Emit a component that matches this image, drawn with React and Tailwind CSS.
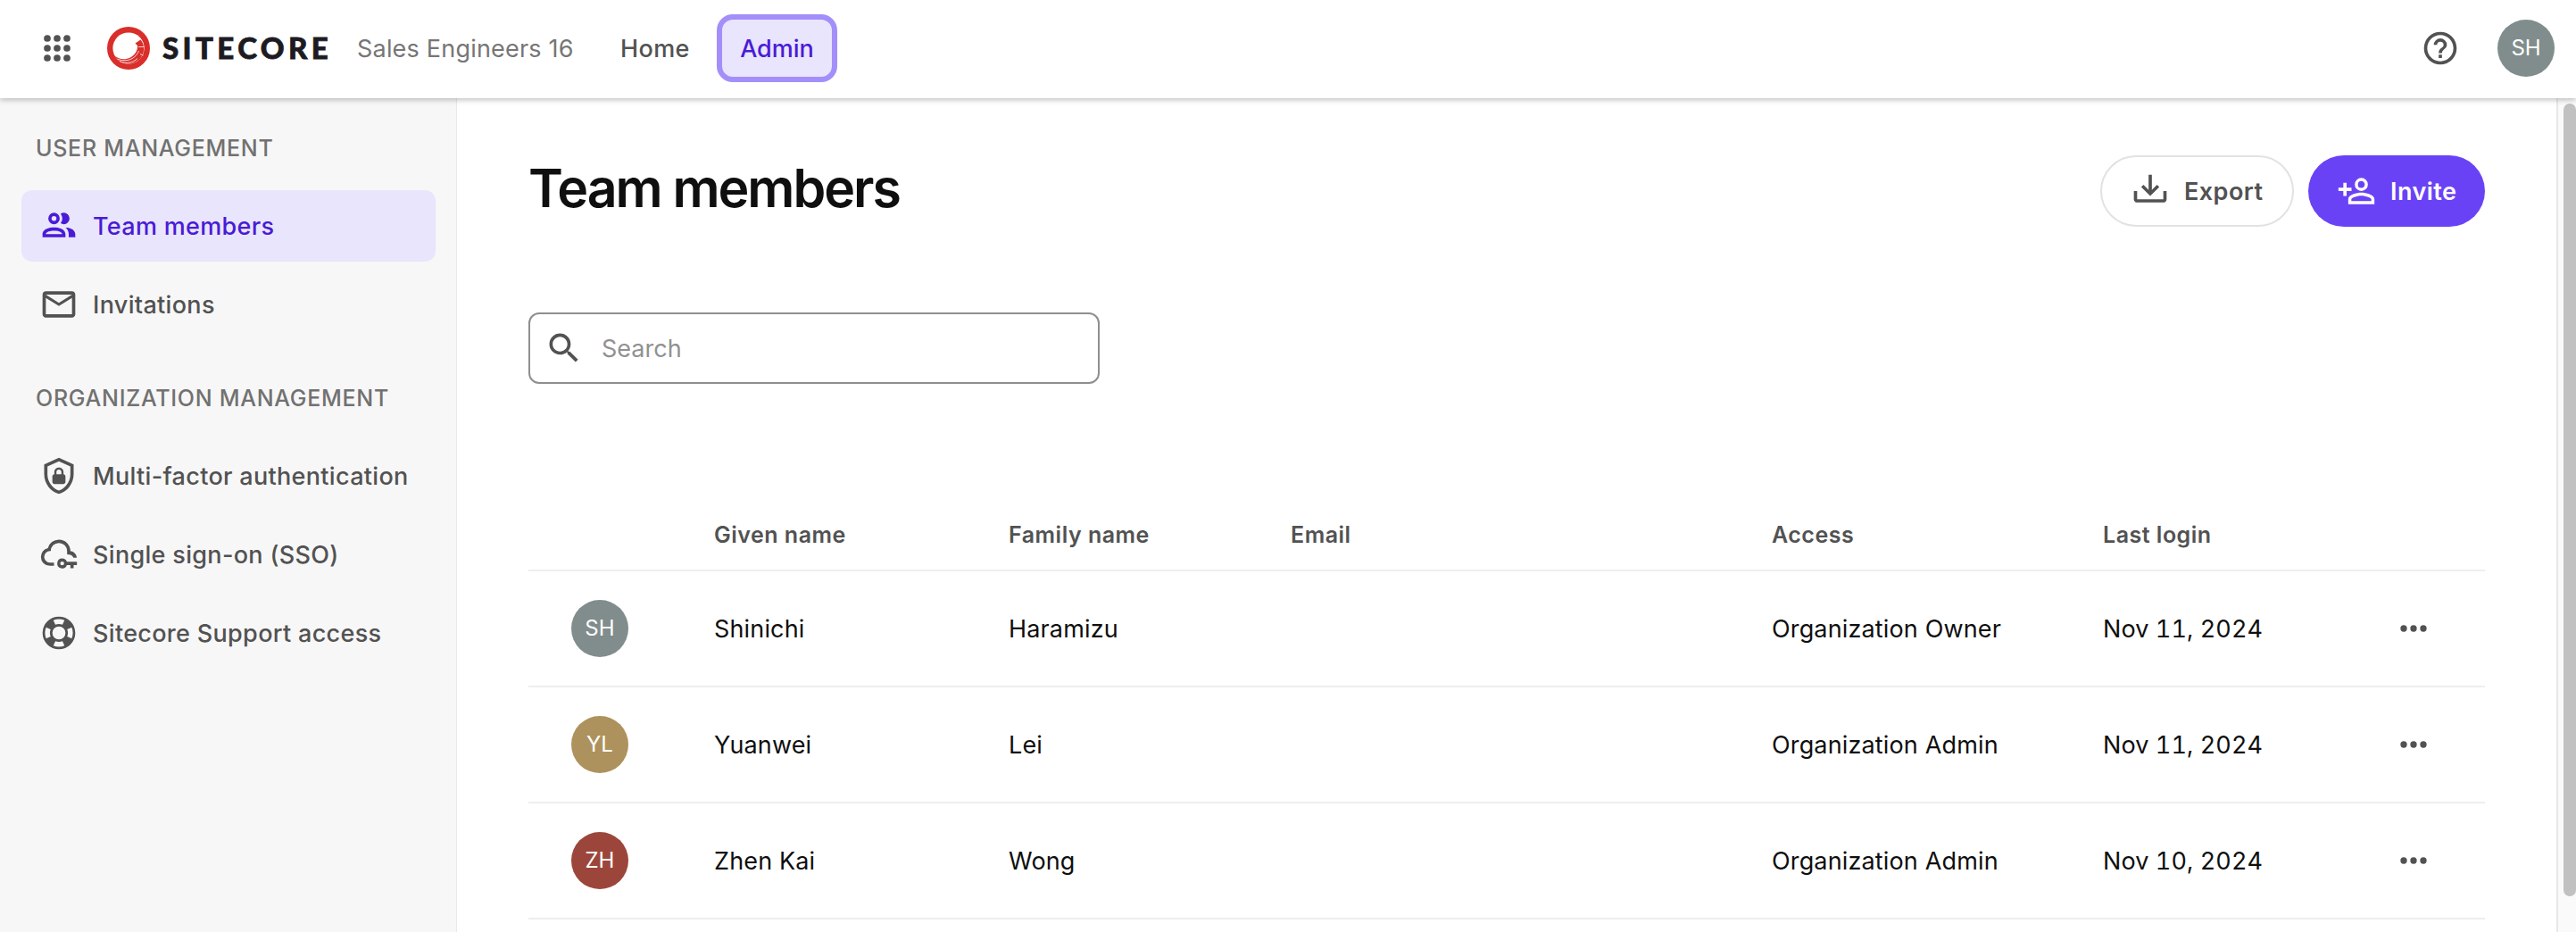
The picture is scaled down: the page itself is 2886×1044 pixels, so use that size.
const ICONS = {
  people: "M13.07 10.41A5 5 0 0 0 13.07 4.59A3.39 3.39 0 0 1 15 4A3.5 3.5 0 0 1 15 11A3.39 3.39 0 0 1 13.07 10.41M5.5 7.5A3.5 3.5 0 1 1 9 11A3.5 3.5 0 0 1 5.5 7.5M7.5 7.5A1.5 1.5 0 1 0 9 6A1.5 1.5 0 0 0 7.5 7.5M16 17V19H2V17S2 13 9 13 16 17 16 17M14 17C13.86 16.22 12.67 15 9 15S4.07 16.31 4 17M15.95 13A5.32 5.32 0 0 1 18 17V19H22V17S22 13.37 15.94 13Z",
  mail: "M22 6C22 4.9 21.1 4 20 4H4C2.9 4 2 4.9 2 6V18C2 19.1 2.9 20 4 20H20C21.1 20 22 19.1 22 18V6M20 6L12 11L4 6H20M20 18H4V8L12 13L20 8V18Z",
  shield: "M21,11C21,16.55 17.16,21.74 12,23C6.84,21.74 3,16.55 3,11V5L12,1L21,5V11M12,21C15.75,20 19,15.54 19,11.22V6.3L12,3.18L5,6.3V11.22C5,15.54 8.25,20 12,21M14.8,11V9.5C14.8,8.1 13.4,7 12,7C10.6,7 9.2,8.1 9.2,9.5V11C8.6,11 8,11.6 8,12.2V15.7C8,16.4 8.6,17 9.2,17H14.7C15.4,17 16,16.4 16,15.8V12.3C16,11.6 15.4,11 14.8,11M13.5,11H10.5V9.5C10.5,8.7 11.2,8.2 12,8.2C12.8,8.2 13.5,8.7 13.5,9.5V11Z",
  cloud: "M9 19H6.5Q4.22 19 2.61 17.43 1 15.85 1 13.58 1 11.63 2.17 10.1 3.35 8.57 5.25 8.15 5.88 5.85 7.75 4.43 9.63 3 12 3 14.93 3 16.96 5.04 19 7.07 19 10 20.73 10.2 21.86 11.5 22.75 12.5 22.95 14H20.85Q20.5 13 19.4 12.4 18.5 12 17 12V10Q17 7.93 15.54 6.46 14.08 5 12 5 9.93 5 8.46 6.46 7 7.93 7 10H6.5Q5.05 10 4.03 11.03 3 12.05 3 13.5 3 14.95 4.03 15.98 5.05 17 6.5 17H9ZM14 14.5A3 3 0 1 0 16.83 18.5H19V20.5H21V18.5H23V16.5H16.83A3 3 0 0 0 14 14.5M14 16.3A1.2 1.2 0 1 1 14 18.7A1.2 1.2 0 1 1 14 16.3Z",
  buoy: "M19.79,15.41C20.74,13.24 20.74,10.75 19.79,8.59L17.05,9.83C17.65,11.21 17.65,12.78 17.06,14.17L19.79,15.41M15.42,4.21C13.25,3.26 10.76,3.26 8.59,4.21L9.83,6.94C11.22,6.35 12.79,6.35 14.18,6.95L15.42,4.21M4.21,8.58C3.26,10.76 3.26,13.24 4.21,15.42L6.95,14.17C6.35,12.79 6.35,11.21 6.95,9.82L4.21,8.58M8.59,19.79C10.76,20.74 13.25,20.74 15.42,19.78L14.18,17.05C12.8,17.65 11.22,17.65 9.84,17.06L8.59,19.79M12,2A10,10 0 0,1 22,12A10,10 0 0,1 12,22A10,10 0 0,1 2,12A10,10 0 0,1 12,2M12,8A4,4 0 0,0 8,12A4,4 0 0,0 12,16A4,4 0 0,0 16,12A4,4 0 0,0 12,8Z",
  invite: "M15,4A4,4 0 0,0 11,8A4,4 0 0,0 15,12A4,4 0 0,0 19,8A4,4 0 0,0 15,4M15,5.9C16.16,5.9 17.1,6.84 17.1,8C17.1,9.16 16.16,10.1 15,10.1A2.1,2.1 0 0,1 12.9,8A2.1,2.1 0 0,1 15,5.9M4,7V10H1V12H4V15H6V12H9V10H6V7H4M15,13C12.33,13 7,14.33 7,17V20H23V17C23,14.33 17.67,13 15,13M15,14.9C17.97,14.9 21.1,16.36 21.1,17V18.1H8.9V17C8.9,16.36 12,14.9 15,14.9Z",
  download: "M2 12H4V17H20V12H22V17C22 18.11 21.11 19 20 19H4C2.9 19 2 18.11 2 17V12M12 15L17.55 9.54L16.13 8.13L13 11.25V2H11V11.25L7.88 8.13L6.46 9.55L12 15Z",
  search: "M9.5,3A6.5,6.5 0 0,1 16,9.5C16,11.11 15.41,12.59 14.44,13.73L14.71,14H15.5L20.5,19L19,20.5L14,15.5V14.71L13.73,14.44C12.59,15.41 11.11,16 9.5,16A6.5,6.5 0 0,1 3,9.5A6.5,6.5 0 0,1 9.5,3M9.5,5C7,5 5,7 5,9.5C5,12 7,14 9.5,14C12,14 14,12 14,9.5C14,7 12,5 9.5,5Z",
  help: "M11,18H13V16H11V18M12,2A10,10 0 0,0 2,12A10,10 0 0,0 12,22A10,10 0 0,0 22,12A10,10 0 0,0 12,2M12,20C7.59,20 4,16.41 4,12C4,7.59 7.59,4 12,4C16.41,4 20,7.59 20,12C20,16.41 16.41,20 12,20M12,6A4,4 0 0,0 8,10H10A2,2 0 0,1 12,8A2,2 0 0,1 14,10C14,12 11,11.75 11,15H13C13,12.75 16,12.5 16,10A4,4 0 0,0 12,6Z",
  dots: "M16,12A2,2 0 0,1 18,10A2,2 0 0,1 20,12A2,2 0 0,1 18,14A2,2 0 0,1 16,12M10,12A2,2 0 0,1 12,10A2,2 0 0,1 14,12A2,2 0 0,1 12,14A2,2 0 0,1 10,12M4,12A2,2 0 0,1 6,10A2,2 0 0,1 8,12A2,2 0 0,1 6,14A2,2 0 0,1 4,12Z",
};

function Icon({ name, className = "size-11" }) {
  return (
    <svg viewBox="0 0 24 24" fill="currentColor" className={`shrink-0 ${className}`}>
      <path d={ICONS[name]} />
    </svg>
  );
}

function Avatar({ initials, color }) {
  return (
    <div className={`flex size-16 shrink-0 items-center justify-center rounded-full text-[24px] leading-none text-white ${color}`}>
      {initials}
    </div>
  );
}

function SitecoreMark() {
  return (
    <svg viewBox="0 0 48 48" className="size-12 shrink-0">
      <circle cx="24" cy="24" r="24" fill="#d92e2a" />
      <circle cx="24" cy="24" r="17.6" fill="#fff" />
      <path d="M8.500 32.500C13 36.500 20 37.500 26 34.500C31.500 31.500 34.500 26 34 21L31.500 18.500L37.500 14.500C42.500 20 42.500 30 36.500 36.500C28 44 15 43 8.500 32.500Z" fill="#d92e2a" />
      <path d="M35 22.500H41.500M11.500 36C19 39.500 27.500 37.500 32 32.500C34 30 35 28.500 35.500 27M37 30.500L40.500 32M14 38.500C21 41.800 29 40.500 34 35.500" fill="none" stroke="#fff" strokeWidth="0.8" />
    </svg>
  );
}

const NAV = [
  { title: "USER MANAGEMENT", items: [["people", "Team members", true], ["mail", "Invitations"]] },
  { title: "ORGANIZATION MANAGEMENT", items: [["shield", "Multi-factor authentication"], ["cloud", "Single sign-on (SSO)"], ["buoy", "Sitecore Support access"]] },
];

const MEMBERS = [
  ["SH", "bg-[#808d8c]", "Shinichi", "Haramizu", "Organization Owner", "Nov 11, 2024"],
  ["YL", "bg-[#ad925d]", "Yuanwei", "Lei", "Organization Admin", "Nov 11, 2024"],
  ["ZH", "bg-[#9c463b]", "Zhen Kai", "Wong", "Organization Admin", "Nov 10, 2024"],
];

const GRID = "grid grid-cols-[208px_330px_316px_539px_371px_1fr] items-center border-b-2 border-[#eeeeee]";

export default function App() {
  return (
    <div className="flex h-[1044px] w-[2886px] flex-col overflow-hidden bg-white font-[Inter] text-[#0f0f0f]">
      <header className="z-10 flex h-[110px] shrink-0 items-center bg-white pr-6 pb-0.5 pl-[42px] text-[27px] shadow-[0_2px_6px_rgba(0,0,0,0.25)]">
        <svg viewBox="0 0 24 24" fill="#525252" className="size-11">
          {[6, 12, 18].map((y) => [6, 12, 18].map((x) => <circle key={`${x}-${y}`} cx={x} cy={y} r="2.1" />))}
        </svg>
        <div className="ml-[34px] flex items-center">
          <SitecoreMark />
          <span className="ml-3.5 w-[186px] font-[Lato] text-[33px] font-black tracking-[4.4px] text-[#1d1b22] [-webkit-text-stroke:0.8px_#1d1b22]">SITECORE</span>
        </div>
        <span className="ml-[32px] w-[243px] pt-0.5 tracking-[0.2px] whitespace-nowrap text-[#767676]">Sales Engineers 16</span>
        <span className="ml-[52px] w-[78px] pt-0.5 font-medium tracking-[0.4px] text-[#525252]">Home</span>
        <span className="ml-[30px] flex h-[76px] w-[135px] items-center justify-center rounded-[18px] border-[6px] border-[#a48ef9] bg-[#e8e5fd] pt-0.5 font-medium text-[#4a1bd6]">Admin</span>
        <div className="ml-auto flex items-center gap-[42px] text-[#525252]">
          <Icon name="help" />
          <Avatar initials="SH" color="bg-[#808d8c]" />
        </div>
      </header>

      <div className="flex min-h-0 flex-1">
        <aside className="w-[512px] shrink-0 border-r border-[#e9e9e9] bg-[#f7f7f7] px-6 pt-6">
          {NAV.map((group) => (
            <section key={group.title} className="mb-[33px]">
              <h2 className="flex h-16 items-center px-4 pt-0.5 text-[25px] font-medium tracking-[0.72px] whitespace-nowrap text-[#717171]">{group.title}</h2>
              <ul className="mt-[15px] flex flex-col gap-2">
                {group.items.map(([icon, label, active]) => (
                  <li key={label} className={`flex h-20 w-[464px] items-center gap-4 rounded-xl px-5 text-[27px] font-medium tracking-[0.32px] whitespace-nowrap ${active ? "bg-[#e8e5fd] text-[#4a1bd6]" : "text-[#525252]"}`}>
                    <Icon name={icon} />
                    <span className="pt-0.5">{label}</span>
                  </li>
                ))}
              </ul>
            </section>
          ))}
        </aside>

        <main className="min-w-0 flex-1 px-20">
          <div className="mt-16 flex items-start justify-between">
            <h1 className="mt-[3px] text-[59px] leading-[68px] font-semibold tracking-[-2.05px]">Team members</h1>
            <div className="flex gap-4 text-[27px] font-semibold tracking-[0.45px]">
              <button className="flex h-20 w-[217px] items-center gap-4 rounded-full border-2 border-[#e2e2e2] pl-8 text-[#525252]">
                <Icon name="download" />
                <span className="pt-0.5">Export</span>
              </button>
              <button className="flex h-20 w-[198px] items-center gap-4 rounded-full bg-[#6a42f6] pl-8 text-white">
                <Icon name="invite" />
                <span className="pt-0.5">Invite</span>
              </button>
            </div>
          </div>

          <div className="mt-24 flex h-20 w-[640px] items-center rounded-xl border-2 border-[#8f8f8f] pl-4">
            <Icon name="search" className="size-11 text-[#525252]" />
            <span className="mt-0.5 ml-5 text-[27px] text-[#919191]">Search</span>
          </div>

          <div className="mt-[130px]">
            <div className={`${GRID} h-20 pt-0.5 text-[25px] font-semibold tracking-[0.5px] text-[#525252]`}>
              <span />
              <span>Given name</span>
              <span>Family name</span>
              <span>Email</span>
              <span>Access</span>
              <span>Last login</span>
            </div>
            {MEMBERS.map(([initials, color, given, family, access, login]) => (
              <div key={given} className={`${GRID} h-[130px] text-[27px] tracking-[0.15px]`}>
                <div className="pl-12"><Avatar initials={initials} color={color} /></div>
                <span className="pt-0.5">{given}</span>
                <span className="pt-0.5">{family}</span>
                <span />
                <span className="pt-0.5">{access}</span>
                <div className="flex items-center justify-between pr-[58px]">
                  <span className="pt-0.5 tracking-[0.1px] tabular-nums">{login}</span>
                  <Icon name="dots" className="size-11 text-[#525252]" />
                </div>
              </div>
            ))}
          </div>
        </main>

        <div className="flex w-[22px] shrink-0 border-l-2 border-[#e8e8e8] bg-[#fafafa] pt-1.5 pl-1.5">
          <div className="h-[888px] w-4 rounded-full bg-[#c1c1c1]" />
        </div>
      </div>
    </div>
  );
}
